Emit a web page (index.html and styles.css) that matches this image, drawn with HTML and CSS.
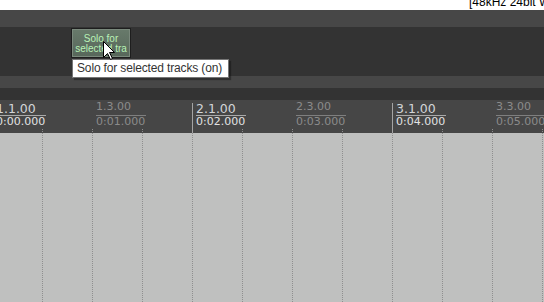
FILE: index.html
```html
<!DOCTYPE html>
<html>
<head>
<meta charset="utf-8">
<link rel="stylesheet" href="styles.css">
</head>
<body>
  <div class="topbar"><span class="fmt">[48kHz 24bit WAV : 2/2ch]</span></div>
  <div class="band band-a"></div>
  <div class="toolbar">
    <div class="btn"><span>Solo for</span><span>selected tra</span></div>
  </div>
  <div class="band band-b"></div>
  <div class="gap"></div>
  <div class="ruler">
    <div class="seg major"><div class="l1">1.1.00</div><div class="l2">0:00.000</div></div>
    <div class="seg minor"><div class="l1">1.3.00</div><div class="l2">0:01.000</div></div>
    <div class="seg major"><div class="l1">2.1.00</div><div class="l2">0:02.000</div></div>
    <div class="seg minor"><div class="l1">2.3.00</div><div class="l2">0:03.000</div></div>
    <div class="seg major"><div class="l1">3.1.00</div><div class="l2">0:04.000</div></div>
    <div class="seg minor"><div class="l1">3.3.00</div><div class="l2">0:05.000</div></div>
  </div>
  <div class="lanes">
    <div class="col"></div><div class="col"></div><div class="col"></div><div class="col"></div>
    <div class="col"></div><div class="col"></div><div class="col"></div><div class="col"></div>
    <div class="col"></div><div class="col"></div><div class="col"></div><div class="col"></div>
  </div>
  <div class="tooltip">Solo for selected tracks (on)</div>
  <svg class="cursor" width="13" height="20" viewBox="0 0 13 20">
    <path d="M0.5 0.5 L0.5 16.5 L4.5 12.5 L7.5 18.5 L9.5 17.5 L6.5 11.5 L11.5 11.5 Z" fill="#fff" stroke="#000" stroke-width="1" stroke-linejoin="miter"/>
  </svg>
</body>
</html>
```

FILE: styles.css
```css
html, body {
  margin: 0;
  padding: 0;
}
body {
  position: relative;
  width: 544px;
  height: 302px;
  overflow: hidden;
  display: flex;
  flex-direction: column;
  background: #333333;
  font-family: "Liberation Sans", Arial, sans-serif;
}
.topbar {
  flex: none;
  height: 10px;
  background: #ffffff;
  overflow: hidden;
  white-space: nowrap;
  padding-left: 469px;
  box-sizing: border-box;
}
.fmt {
  display: block;
  margin-top: -4px;
  font-size: 12px;
  line-height: 12px;
  color: #000;
}
.band {
  flex: none;
  background: #474747;
}
.band-a { height: 17px; }
.band-b { height: 12px; }
.toolbar {
  flex: none;
  height: 49px;
  background: #333333;
  padding: 1px 0 0 71px;
  box-sizing: border-box;
}
.btn {
  width: 60px;
  height: 30px;
  box-sizing: border-box;
  border: 1px solid #1e1e1e;
  box-shadow: inset 0 0 0 1px #7a897c;
  background: linear-gradient(#687a6b, #57675a);
  display: flex;
  flex-direction: column;
  align-items: center;
  padding-top: 5px;
  font-size: 10px;
  line-height: 10px;
  color: #b8f2b6;
  white-space: nowrap;
  overflow: hidden;
}
.gap {
  flex: none;
  height: 12px;
  background: #333333;
}
.ruler {
  flex: none;
  height: 33px;
  background: #464646;
  display: flex;
  margin-left: -8px;
  font-family: "DejaVu Sans", Verdana, sans-serif;
  white-space: nowrap;
}
.seg {
  flex: none;
  width: 100px;
  box-sizing: border-box;
  padding: 2px 0 0 4px;
  background-repeat: no-repeat;
}
.seg.minor {
  background-image:
    repeating-linear-gradient(to bottom, #8e8e8e 0 1px, transparent 1px 2px),
    repeating-linear-gradient(to bottom, #8e8e8e 0 1px, transparent 1px 2px);
  background-size: 1px 4px, 1px 4px;
  background-position: 0 100%, 50px 100%;
}
.seg.major {
  background-image:
    linear-gradient(#a4a4a4, #a4a4a4),
    repeating-linear-gradient(to bottom, #8e8e8e 0 1px, transparent 1px 2px);
  background-size: 1px 30px, 1px 4px;
  background-position: 0 100%, 50px 100%;
}
.l1 {
  width: 50px;
  height: 13px;
  border-bottom: 1px solid;
  overflow: visible;
}
.l2 {
  font-size: 11px;
  line-height: 12px;
}
.major .l1 {
  font-size: 12.5px;
  line-height: 13px;
  color: #d2d5d9;
  border-color: #a9a9a9;
}
.major .l2 {
  color: #e2e2e2;
}
.minor .l1 {
  font-size: 11px;
  line-height: 10px;
  color: #8b8b8b;
  border-color: #7f7f7f;
}
.minor .l2 {
  color: #8b8b8b;
}
.lanes {
  flex: 1;
  display: flex;
  margin-left: -8px;
  background: #bfc0bf;
}
.col {
  flex: none;
  width: 50px;
  box-sizing: border-box;
  border-left: 1px dotted #8f8f8f;
}
.tooltip {
  position: absolute;
  left: 72px;
  top: 59px;
  width: 157px;
  height: 19px;
  box-sizing: border-box;
  border: 1px solid #767676;
  background: #ffffff;
  box-shadow: 2px 2px 1px rgba(0, 0, 0, 0.3);
  padding-left: 4px;
  font-size: 12px;
  line-height: 17px;
  letter-spacing: -0.15px;
  color: #333;
  white-space: nowrap;
}
.cursor {
  position: absolute;
  left: 103px;
  top: 41px;
}
```
